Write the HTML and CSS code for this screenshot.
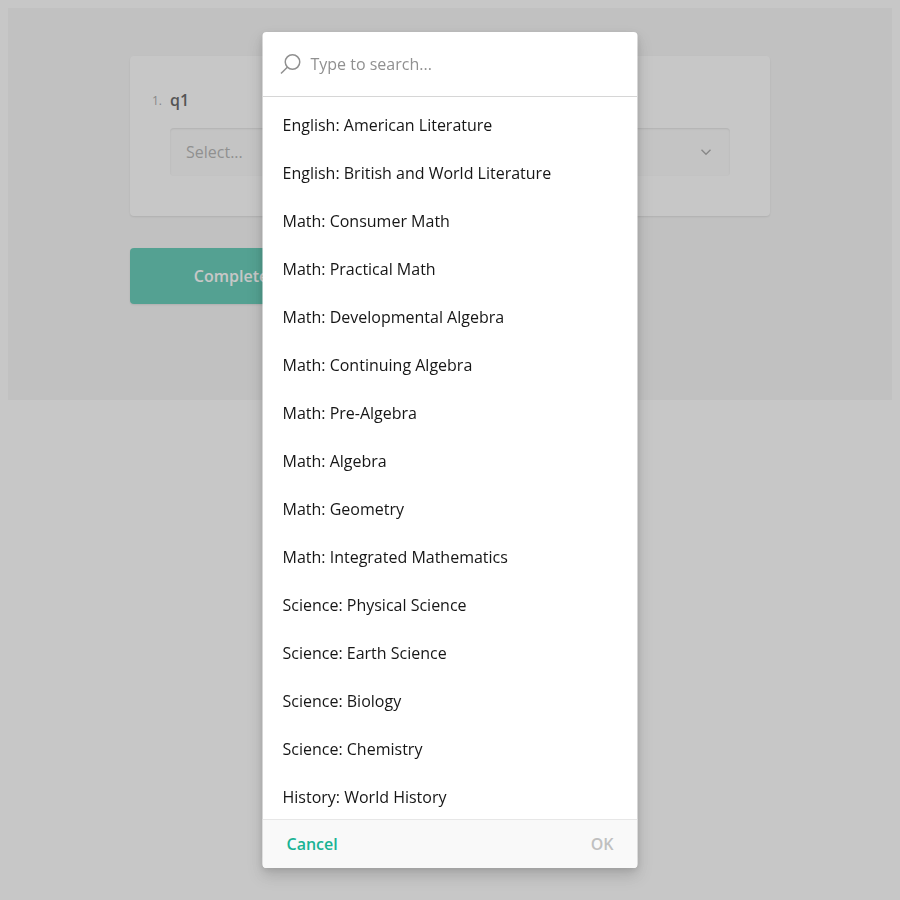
FILE: index.html
```html
<!DOCTYPE html>
<html lang="en">
<head>
<meta charset="utf-8">
<title>Survey</title>
<link rel="stylesheet" href="styles.css">
</head>
<body>
<main class="survey">
  <section class="question">
    <h5 class="title"><span class="number">1.</span><span>q1</span></h5>
    <div class="dropdown">
      <span>Select...</span>
      <svg width="16" height="16" viewBox="0 0 16 16"><path d="M3.500 5.750 8 10.250l4.500-4.500" fill="none" stroke="#808080" stroke-width="1.400"/></svg>
    </div>
  </section>
  <button class="complete">Complete</button>
</main>
<div class="overlay">
  <div class="popup">
    <div class="search">
      <svg width="24" height="24" viewBox="0 0 24 24" fill="none" stroke="#909090" stroke-width="1.500"><circle cx="14" cy="10" r="7.250"/><path d="M8.800 15.200 2.500 21.500"/></svg>
      <span>Type to search...</span>
    </div>
    <ul class="list">
      <li>English: American Literature</li>
      <li>English: British and World Literature</li>
      <li>Math: Consumer Math</li>
      <li>Math: Practical Math</li>
      <li>Math: Developmental Algebra</li>
      <li>Math: Continuing Algebra</li>
      <li>Math: Pre-Algebra</li>
      <li>Math: Algebra</li>
      <li>Math: Geometry</li>
      <li>Math: Integrated Mathematics</li>
      <li>Science: Physical Science</li>
      <li>Science: Earth Science</li>
      <li>Science: Biology</li>
      <li>Science: Chemistry</li>
      <li>History: World History</li>
    </ul>
    <footer class="footer"><button class="cancel">Cancel</button><button class="ok">OK</button></footer>
  </div>
</div>
</body>
</html>
```
FILE: styles.css
```css
* { box-sizing: border-box; }
body { margin: 8px; font: 16px/24px "Open Sans", sans-serif; color: #161616; background: #fff; }
button { border: 0; font: inherit; font-weight: 600; }
.survey { height: 392px; padding: 48px 122px; background: #f3f3f3; }
.question { height: 160px; padding: 32px 40px; background: #fff; border-radius: 4px; box-shadow: 0 1px 2px rgba(0,0,0,.15); }
.title { display: flex; margin: 0 0 16px -18px; font-size: 16px; font-weight: 600; }
.number { width: 18px; padding-top: 1px; font-size: 12px; line-height: 23px; font-weight: 500; color: #808080; }
.dropdown { display: flex; align-items: center; justify-content: space-between; height: 48px; padding: 0 16px; color: #909090; background: #f9f9f9; border-radius: 4px; box-shadow: inset 0 1px 2px rgba(0,0,0,.15); }
.complete { display: block; width: 202px; height: 56px; margin-top: 32px; color: #fff; background: #19b394; border-radius: 4px; box-shadow: 0 1px 2px rgba(0,0,0,.15); }
.overlay { position: fixed; inset: 0; display: flex; justify-content: center; padding: 32px 1px 32px 0; background: rgba(144,144,144,.5); }
.popup { display: flex; flex-direction: column; width: 375px; overflow: hidden; background: #fff; border-radius: 4px; box-shadow: 0 2px 6px rgba(0,0,0,.1), 0 8px 16px rgba(0,0,0,.15); transform: translateX(.5px); }
.search { display: flex; align-items: center; flex: none; gap: 8px; height: 65px; padding: 0 16px; color: #909090; border-bottom: 1px solid #d6d6d6; }
.list { flex: 1; min-height: 0; margin: 0; padding: 4px 0 0; overflow: hidden; list-style: none; }
.list li { height: 48px; padding: 12px 20px; }
.footer { display: flex; justify-content: space-between; flex: none; height: 49px; padding: 0 24px; background: #f9f9f9; border-top: 1px solid #e7e7e7; }
.footer button { padding: 0; background: transparent; }
.cancel { color: #19b394; }
.ok { color: #c0c0c0; }
```
